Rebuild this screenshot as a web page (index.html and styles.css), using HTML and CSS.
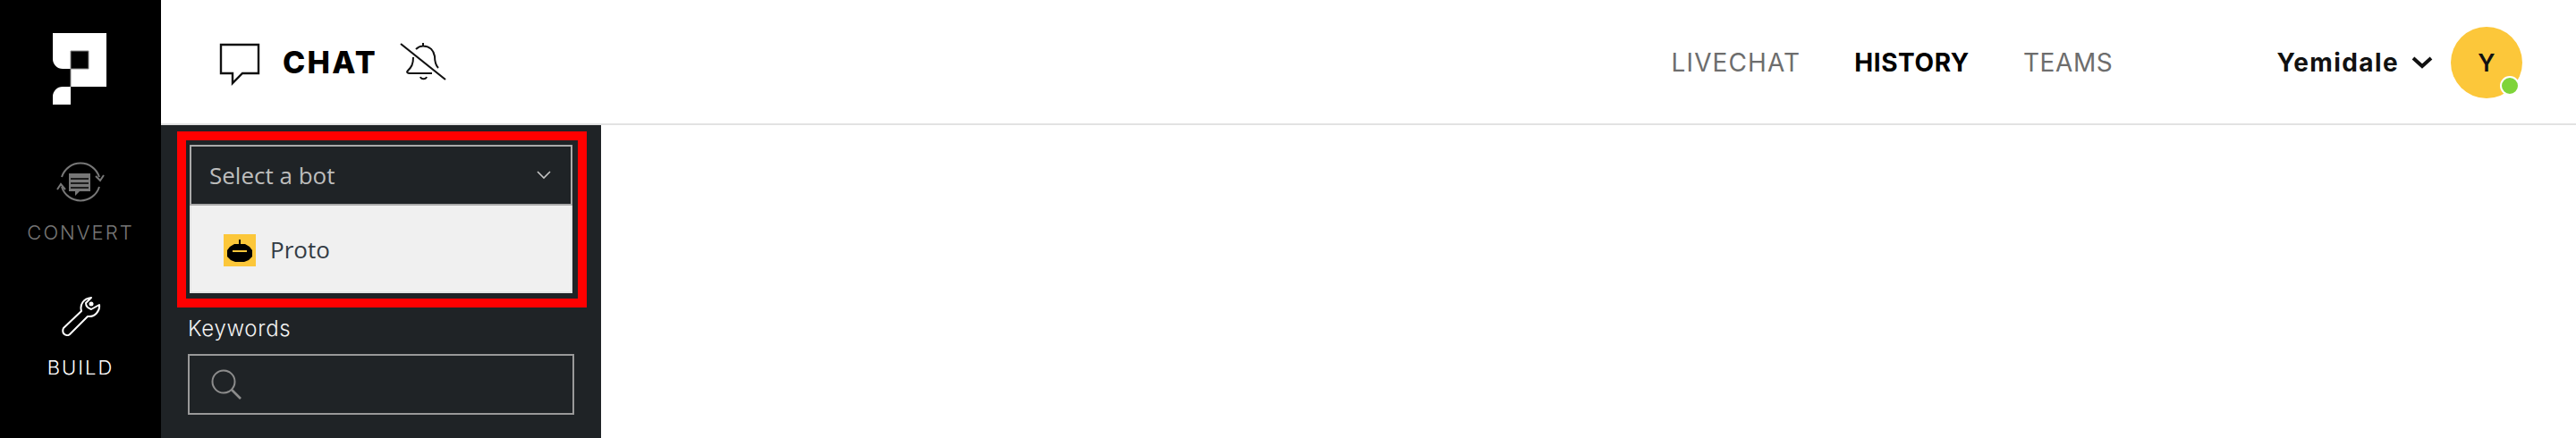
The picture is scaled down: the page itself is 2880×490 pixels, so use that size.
FILE: index.html
```html
<!DOCTYPE html>
<html lang="en">
<head>
<meta charset="utf-8">
<title>Chat history</title>
<link rel="stylesheet" href="styles.css">
</head>
<body>
<aside class="rail">
  <svg class="logo" width="60" height="80" viewBox="0 0 60 80">
    <path fill="#fff" d="M0 0H60V60H20V40H11A11 11 0 0 1 0 29ZM20 20V40H40V20Z" fill-rule="evenodd"/>
    <path fill="#fff" d="M20 60V80H0V71A11 11 0 0 1 11 60Z"/>
    <path fill="none" stroke="#888" stroke-width="1" d="M20 20H40V40H20ZM20 40V60"/>
  </svg>
  <div class="rail-item rail-convert">
    <svg width="54" height="48" viewBox="0 0 54 48" fill="none" stroke="#777" stroke-width="2">
      <path d="M6 17A22 22 0 0 1 48 17"/>
      <path d="M48 28A22 22 0 0 1 6 28"/>
      <path d="M44 16L49 21L53 15"/>
      <path d="M1 31L5 25L10 31"/>
      <path fill="#777" stroke="none" d="M14 13H38V33H26L21 38V33H14Z"/>
      <path stroke="#000" stroke-width="1.5" d="M16 19H36M16 24H36M16 29H36"/>
    </svg>
    <span class="rail-label">CONVERT</span>
  </div>
  <div class="rail-item rail-build">
    <svg width="44" height="44" viewBox="0 0 44 44" fill="none" stroke="#fff" stroke-width="2" stroke-linejoin="round">
      <path d="M2 35L22 16C20 9 24 2 33 1L27 7C27 11 30 13 33 14L42 9C43 16 37 23 29 22L9 42C7 44 4 43 2 41C1 39 1 37 2 35Z"/>
      <circle cx="33" cy="8" r="2.5" fill="#fff" stroke="none"/>
    </svg>
    <span class="rail-label">BUILD</span>
  </div>
</aside>
<div class="main">
  <header class="topbar">
    <svg class="chat-icon" width="46" height="48" viewBox="0 0 46 48" fill="none" stroke="#111" stroke-width="2.4">
      <path d="M2 2H44V34H26L15 45V34H2Z"/>
    </svg>
    <h1 class="title">CHAT</h1>
    <svg class="bell" width="52" height="44" viewBox="0 0 52 44" fill="none" stroke="#111" stroke-width="2">
      <path d="M1 1L51 41" stroke-width="2.2"/>
      <path d="M26 0V4M18 7C21 4 24 3.500 26 3.500C34 3.500 38 9 39 15C39 22 40 25 43 28"/>
      <path d="M15 16C15 24 13 27 9 31C7 33 9 34 11 34H36"/>
      <path d="M23 38C24 41 29 41 30 38"/>
    </svg>
    <nav class="tabs">
      <a class="tab tab-live">LIVECHAT</a>
      <a class="tab tab-active">HISTORY</a>
      <a class="tab">TEAMS</a>
    </nav>
    <div class="user">
      <span class="user-name">Yemidale</span>
      <svg width="24" height="14" viewBox="0 0 24 14" fill="none" stroke="#111" stroke-width="4">
        <path d="M2 2L12 11L22 2"/>
      </svg>
      <div class="avatar">Y<span class="status"></span></div>
    </div>
  </header>
  <div class="content">
    <section class="panel">
      <div class="highlight">
        <div class="select">
          <div class="select-head">
            <span>Select a bot</span>
            <svg width="16" height="10" viewBox="0 0 16 10" fill="none" stroke="#c4c4c4" stroke-width="1.600">
              <path d="M1 1L8 8L15 1"/>
            </svg>
          </div>
          <div class="select-menu">
            <div class="option">
              <svg width="36" height="36" viewBox="0 0 36 36">
                <rect width="36" height="36" fill="#fcc73a"/>
                <path fill="#000" d="M17 6H19V11H24L29 14L32 18V25L28 29L23 31H13L8 29L4 25V18L7 14L12 11H17Z"/>
                <rect x="10" y="18" width="16" height="2" fill="#fcc73a"/>
              </svg>
              <span class="option-name">Proto</span>
            </div>
          </div>
        </div>
      </div>
      <label class="field-label">Keywords</label>
      <div class="search">
        <svg width="34" height="34" viewBox="0 0 34 34" fill="none" stroke="#8c8c8c" stroke-width="2">
          <circle cx="14" cy="14" r="12.500"/>
          <path d="M23 23L33 33" stroke-width="2.600"/>
        </svg>
      </div>
    </section>
    <div class="canvas"></div>
  </div>
</div>
</body>
</html>
```
FILE: styles.css
```css
* { box-sizing: border-box; }
html, body { height: 100%; }
body {
  margin: 0;
  display: flex;
  height: 490px;
  overflow: hidden;
  background: #fff;
  font-family: Inter, "Liberation Sans", sans-serif;
}
.rail {
  width: 180px;
  flex: none;
  background: #000;
  display: flex;
  flex-direction: column;
  align-items: center;
  padding-top: 37px;
}
.logo { flex: none; margin-left: -2px; }
.rail-item {
  display: flex;
  flex-direction: column;
  align-items: center;
}
.rail-convert { margin-top: 64px; color: #777; }
.rail-build { margin-top: 59px; color: #fff; }
.rail-build svg { margin-left: 2px; }
.rail-label { font-size: 22px; font-weight: 300; line-height: 26px; margin-top: 18px; letter-spacing: 2px; }
.rail-build .rail-label { margin-top: 22px; }
.main { flex: 1; min-width: 0; display: flex; flex-direction: column; }
.topbar {
  height: 140px;
  flex: none;
  border-bottom: 2px solid #e2e2e2;
  display: flex;
  align-items: center;
  padding: 2px 0 0 65px;
  color: #000;
}
.chat-icon { flex: none; margin-top: 4px; }
.title { margin: 0 0 0 25px; font-size: 34px; font-weight: 800; line-height: 40px; letter-spacing: 2.3px; }
.bell { flex: none; margin-left: 25px; }
.tabs { display: flex; gap: 60px; margin-left: auto; }
.tab { font-size: 28px; color: #6d6d6d; line-height: 32px; font-weight: 400; letter-spacing: 0.6px; }
.tab-live { letter-spacing: 1.1px; }
.tab-active { color: #000; font-weight: 700; }
.user { display: flex; align-items: center; margin-left: 183px; margin-right: 60px; }
.user-name { font-size: 28px; font-weight: 700; color: #111; letter-spacing: 1.4px; }
.user svg { margin-left: 14px; margin-right: 20px; }
.avatar {
  position: relative;
  width: 80px;
  height: 80px;
  border-radius: 50%;
  background: #fcc73a;
  display: flex;
  align-items: center;
  justify-content: center;
  font-size: 27px;
  font-weight: 600;
  color: #111;
}
.status {
  position: absolute;
  right: 3px;
  bottom: 3px;
  width: 22px;
  height: 22px;
  border-radius: 50%;
  background: #7ed43a;
  border: 2px solid #fff;
}
.content { flex: 1; display: flex; min-height: 0; }
.panel {
  width: 492px;
  flex: none;
  background: #1f2326;
  padding: 7px 16px 0 18px;
}
.highlight { border: 10px solid #f00; padding: 5px 6px 6px 4px; width: 458px; }
.select { width: 428px; }
.select-head {
  height: 68px;
  border: 2px solid #aaa;
  display: flex;
  align-items: center;
  justify-content: space-between;
  padding: 0 22px 0 20px;
  font-family: "Open Sans", "Noto Sans", sans-serif;
  font-size: 26px;
  color: #bdbdbd;
}
.select-menu {
  height: 98px;
  background: #f0f0f0;
  border: 2px solid #e4e4e4;
  border-top: 0;
  padding: 32px 0 0 36px;
}
.option {
  display: flex;
  align-items: center;
  gap: 16px;
  height: 36px;
  font-family: "Open Sans", "Noto Sans", sans-serif;
  font-size: 26px;
  color: #333c44;
}
.option-name { margin-top: -3px; }
.field-label {
  display: block;
  margin-top: 9px;
  margin-left: 12px;
  font-size: 24px;
  font-weight: 300;
  line-height: 30px;
  letter-spacing: 0.7px;
  color: #f2f2f2;
}
.search {
  margin: 13px 0 0 12px;
  width: 432px;
  height: 68px;
  border: 2px solid #999;
  display: flex;
  align-items: center;
  padding-left: 24px;
}
.canvas { flex: 1; background: #fff; }
```
